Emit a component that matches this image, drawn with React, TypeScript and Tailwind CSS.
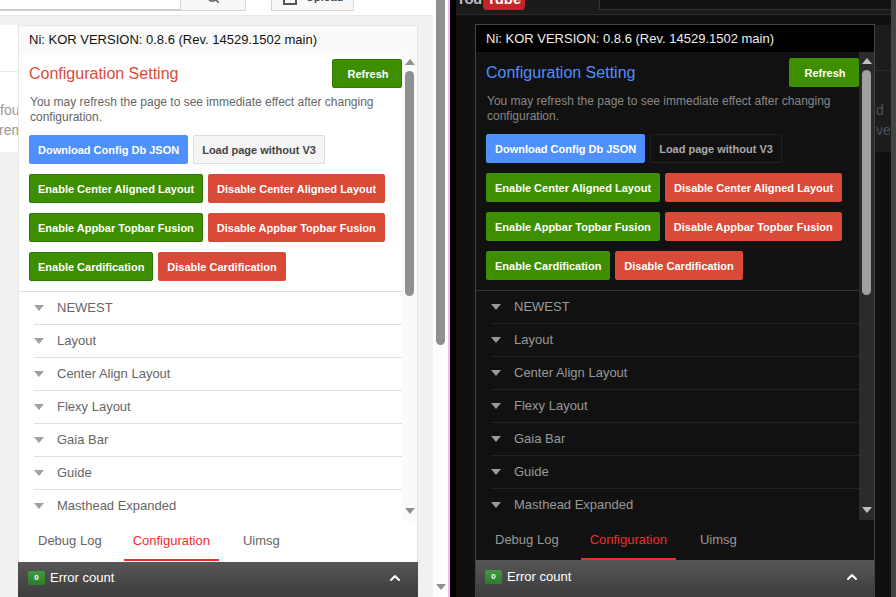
import { ChevronUp, Search } from "lucide-react";

const sections = ["NEWEST", "Layout", "Center Align Layout", "Flexy Layout", "Gaia Bar", "Guide", "Masthead Expanded"];

const light = {
  panel: "border-[#e5e5e5] bg-white left-[18px] top-[25px]",
  header: "bg-[#fafafa] text-[#111]",
  title: "text-[#dd4b39]",
  text: "text-[#666]",
  plain: "bg-[#f5f5f5] border-[#dcdcdc] text-[#444]",
  green: "border-[#2f7a00]",
  rule: "border-[#e2e2e2]",
  row: "border-[#e2e2e2] text-[#666]",
  tab: "text-[#666]",
  track: "bg-[#fafafa]",
  thumb: "bg-[#909090]",
  arrow: "#909090",
  caret: "#a0a0a0",
  footer: "left-[-1px] right-[-1px] h-[35px] pb-[3px] pl-[10px] pr-[15px]",
};

const dark = {
  panel: "border-[#444] bg-[#111] left-[25px] top-[24px]",
  header: "bg-black text-[#eee]",
  title: "text-[#4d90fe]",
  text: "text-[#888]",
  plain: "bg-[#111] border-[#222] text-[#aaa]",
  green: "border-[#3d9400]",
  rule: "border-[#333]",
  row: "border-[#222] text-[#999]",
  tab: "text-[#999]",
  track: "bg-[#2b2b2b]",
  thumb: "bg-[#a0a0a0]",
  arrow: "#c0c0c0",
  caret: "#999999",
  footer: "left-0 right-0 h-[37px] pb-[4px] pl-[9px] pr-[14px]",
};

type Theme = typeof light;

const Btn = ({ label, className }: { label: string; className: string }) => (
  <button className={`h-[29px] pt-[2px] px-[8px] border rounded-[2px] text-[11px] font-bold whitespace-nowrap ${className}`}>{label}</button>
);

const BtnRow = ({ on, off, theme }: { on: string; off: string; theme: Theme }) => (
  <div className="flex gap-[5px] mt-[10px]">
    <Btn label={on} className={`bg-[#3d8f00] text-white ${theme.green}`} />
    <Btn label={off} className="bg-[#d94a38] border-[#d94a38] text-white" />
  </div>
);

const Tri = ({ up, color, className }: { up?: boolean; color: string; className?: string }) => (
  <svg width="10" height="6" viewBox="0 0 10 6" className={className}>
    <path d={up ? "M5 0L10 6H0Z" : "M0 0H10L5 6Z"} fill={color} />
  </svg>
);

const Panel = ({ theme }: { theme: Theme }) => (
  <div className={`absolute w-[400px] bottom-0 border flex flex-col ${theme.panel}`}>
    <div className={`h-[27px] pl-[10px] flex items-center shrink-0 text-[13px] ${theme.header}`}>
      Ni: KOR VERSION: 0.8.6 (Rev. 14529.1502 main)
    </div>
    <div className="h-[468px] flex shrink-0">
      <div className="flex-1 min-w-0 overflow-hidden">
        <div className="pl-[10px] pt-[6px] pb-[10px]">
          <div className="flex justify-between items-center">
            <h3 className={`text-[16px] ${theme.title}`}>Configuration Setting</h3>
            <Btn label="Refresh" className={`w-[70px] bg-[#3d8f00] text-white px-0 pl-[10px] ${theme.green}`} />
          </div>
          <p className={`mt-[7px] ml-px text-[12px] leading-[15px] w-[360px] ${theme.text}`}>
            You may refresh the page to see immediate effect after changing configuration.
          </p>
          <div className="flex gap-[5px] mt-[10px]">
            <Btn label="Download Config Db JSON" className="bg-[#4d90fe] border-[#4d90fe] text-white" />
            <Btn label="Load page without V3" className={theme.plain} />
          </div>
          <BtnRow on="Enable Center Aligned Layout" off="Disable Center Aligned Layout" theme={theme} />
          <BtnRow on="Enable Appbar Topbar Fusion" off="Disable Appbar Topbar Fusion" theme={theme} />
          <BtnRow on="Enable Cardification" off="Disable Cardification" theme={theme} />
        </div>
        <div className={`border-t pl-[15px] ${theme.rule}`}>
          {sections.map((name, i) => (
            <div key={name} className={`flex items-center text-[13px] ${i ? "h-[33px] border-t" : "h-[32px]"} ${theme.row}`}>
              <Tri color={theme.caret} className="mr-[13px]" />
              {name}
            </div>
          ))}
        </div>
      </div>
      <div className={`w-[15px] shrink-0 flex flex-col items-center ${theme.track}`}>
        <Tri up color={theme.arrow} className="mt-[6px]" />
        <div className={`w-[9px] h-[225px] rounded-full mt-[6px] ${theme.thumb}`} />
        <Tri color={theme.arrow} className="mt-auto mb-[7px]" />
      </div>
    </div>
    <div className="h-[40px] flex gap-[13px] pl-[10px] shrink-0 text-[13px]">
      <div className={`px-[9px] pt-[10px] ${theme.tab}`}>Debug Log</div>
      <div className="px-[9px] pt-[10px] text-[#f42b2b] border-b-2 border-[#f42b2b]">Configuration</div>
      <div className={`ml-[2px] px-[9px] pt-[10px] ${theme.tab}`}>Uimsg</div>
    </div>
    <div className={`absolute bottom-[-1px] bg-gradient-to-b from-[#575757] to-[#3c3c3c] flex items-center ${theme.footer}`}>
      <span className="w-[17px] h-[14px] rounded-[2px] bg-gradient-to-b from-[#3f9a3f] to-[#2c7d2c] text-white text-[8px] font-bold flex items-center justify-center">0</span>
      <span className="ml-[5px] text-[13px] text-white">Error count</span>
      <ChevronUp size={16} strokeWidth={3} className="ml-auto text-white" />
    </div>
  </div>
);

export default function App() {
  return (
    <div className="h-[597px] w-[896px] flex overflow-hidden font-['Liberation_Sans',Arial,sans-serif]">
      {/* light page */}
      <div className="relative w-[448px] shrink-0 bg-[#f1f1f1] flex">
        <div className="w-[433px] shrink-0">
          <div className="h-[16px] bg-white border-b border-[#e8e8e8] flex items-start">
            <div className="w-[180px] h-[11px] border-b-2 border-[#ccc]" />
            <div className="w-[66px] h-[11px] bg-[#f8f8f8] border border-t-0 border-[#d3d3d3] flex justify-center overflow-hidden">
              <Search size={14} strokeWidth={3} className="text-[#666] mt-[-10px]" />
            </div>
            <div className="ml-[25px] w-[83px] h-[11px] bg-[#f8f8f8] border border-t-0 border-[#d3d3d3] overflow-hidden flex items-start pl-[11px] gap-[9px]">
              <span className="w-[14px] h-[5px] border-2 border-t-0 border-[#555]" />
              <span className="mt-[-3px] text-[11px] leading-[0px] font-bold text-[#444]">Upload</span>
            </div>
          </div>
          <div className="w-[18px] h-[127px] mt-[9px] bg-white overflow-hidden">
            <div className="h-[47px] border-b border-[#e8e8e8]" />
            <div className="pt-[28px] text-[14px] leading-[20px] text-[#999] whitespace-nowrap">
              <div>fou</div>
              <div className="ml-[-1px]">rem</div>
            </div>
          </div>
        </div>
        <div className="flex-1 bg-[#fdfdfd] flex flex-col items-center">
          <div className="w-[9px] h-[345px] bg-[#909090] rounded-b-full" />
          <Tri color="#909090" className="mt-auto mb-[7px]" />
        </div>
        <Panel theme={light} />
      </div>

      <div className="w-[2px] shrink-0 bg-[#f8b8f8]" />

      {/* dark page */}
      <div className="relative flex-1 flex bg-black">
        <div className="w-[6px] shrink-0" />
        <div className="flex-1 min-w-0 bg-[#101010]">
          <div className="h-[15px] bg-[#1b1b1b] border-b border-[#2a2a2a] flex items-start overflow-hidden">
            <span className="mt-[-2px] w-[27px] text-[15px] leading-[2px] font-bold text-[#bbb] tracking-[-0.5px]">You</span>
            <span className="w-[42px] h-[10px] rounded-b-[4px] bg-[#c4242b] overflow-hidden">
              <span className="block mt-[-2px] text-white text-[15px] leading-[2px] font-bold text-center">Tube</span>
            </span>
            <div className="ml-[74px] flex-1 h-[10px] bg-[#111] border-l border-b border-[#333]" />
          </div>
          <div className="ml-[419px] h-[127px] mt-[10px] bg-[#1c1c1c] overflow-hidden">
            <div className="h-[46px] border-b border-[#2b2b2b]" />
            <div className="pt-[29px] pl-[1px] text-[14px] leading-[20px] text-[#4a5260] whitespace-nowrap">
              <div>d</div>
              <div>ve</div>
            </div>
          </div>
        </div>
        <div className="w-[6px] shrink-0 bg-[#444]" />
        <Panel theme={dark} />
      </div>
    </div>
  );
}
